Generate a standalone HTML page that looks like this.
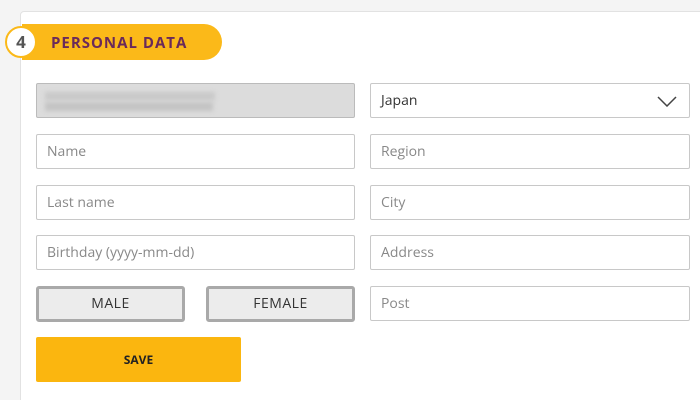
<!DOCTYPE html>
<html style="overflow:hidden;height:400px"><head><style>
body{margin:0;width:700px;height:400px;background:#f4f4f4;position:relative;overflow:hidden;font-family:"Open Sans","Liberation Sans","DejaVu Sans",sans-serif;}
.card{position:absolute;left:20px;top:11px;width:690px;height:400px;background:#fff;border:1px solid #e2e2e2;border-radius:4px;}
.pill{position:absolute;left:22px;top:24px;width:200px;height:36px;background:#fbb919;border-radius:0 18px 18px 0;}
.pill span{position:absolute;left:29px;top:9px;font-size:15px;font-weight:bold;letter-spacing:1px;color:#6a2a5a;}
.circ{position:absolute;left:5px;top:26px;width:28px;height:28px;border:2px solid #fbb919;background:#fff;border-radius:50%;text-align:center;line-height:28px;font-size:17px;font-weight:bold;color:#555;}
.in{position:absolute;height:35px;border:1px solid #c8c8c8;border-radius:2px;background:#fff;box-sizing:border-box;font-size:14px;color:#888;line-height:33px;padding-left:10px;}
.l{left:36px;width:319px}.r{left:370px;width:320px}
.g{position:absolute;top:286px;height:36px;width:149px;box-sizing:border-box;border:3px solid #a9a9a9;border-radius:3px;background:#ececec;text-align:center;line-height:30px;font-size:14px;color:#333;letter-spacing:.5px}
.save{position:absolute;left:36px;top:337px;width:205px;height:45px;background:#fbb60f;border-radius:2px;text-align:center;line-height:45px;font-size:12px;font-weight:bold;color:#222;}
</style></head><body>
<div class="card"></div>
<div class="pill"><span>PERSONAL DATA</span></div>
<div class="circ">4</div>
<div class="in l" style="top:83px;background:#dcdcdc;border-color:#bbb">
<div style="position:absolute;left:8px;top:8px;width:170px;height:8px;background:#c9c9c9;filter:blur(2px)"></div>
<div style="position:absolute;left:8px;top:18px;width:168px;height:9px;background:#c4c4c4;filter:blur(2px)"></div></div>
<div class="in r" style="top:83px;color:#333">Japan
<svg style="position:absolute;right:12px;top:12px" width="20" height="11" viewBox="0 0 20 11"><path d="M1 1L10 10L19 1" fill="none" stroke="#444" stroke-width="1.5"/></svg></div>
<div class="in l" style="top:134px">Name</div>
<div class="in r" style="top:134px">Region</div>
<div class="in l" style="top:185px">Last name</div>
<div class="in r" style="top:185px">City</div>
<div class="in l" style="top:235px">Birthday (yyyy-mm-dd)</div>
<div class="in r" style="top:235px">Address</div>
<div class="g" style="left:36px">MALE</div>
<div class="g" style="left:206px">FEMALE</div>
<div class="in r" style="top:286px">Post</div>
<div class="save">SAVE</div>
</body></html>
